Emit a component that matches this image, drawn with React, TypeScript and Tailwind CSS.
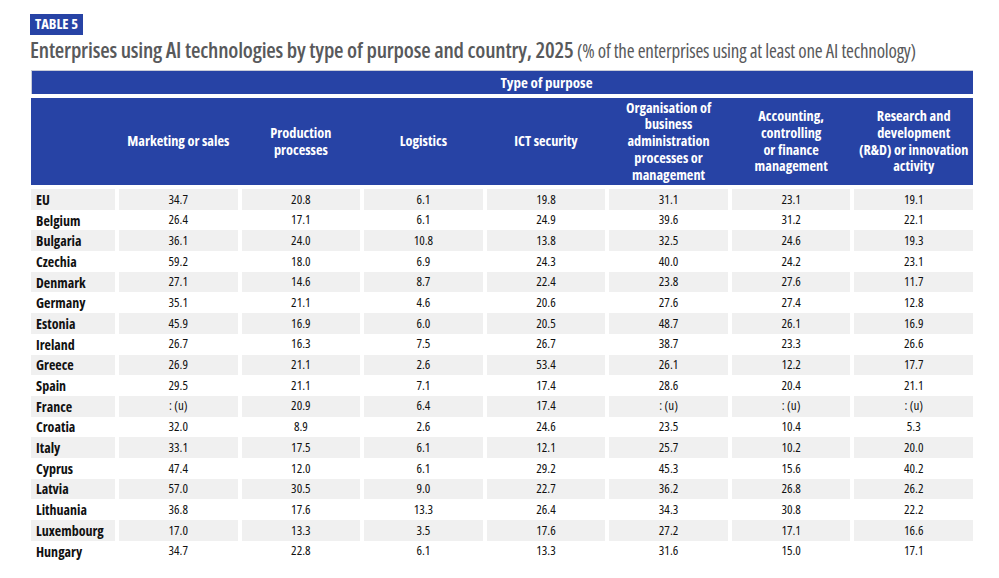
const rows: [string, string[]][] = [
  ["EU", ["34.7", "20.8", "6.1", "19.8", "31.1", "23.1", "19.1"]],
  ["Belgium", ["26.4", "17.1", "6.1", "24.9", "39.6", "31.2", "22.1"]],
  ["Bulgaria", ["36.1", "24.0", "10.8", "13.8", "32.5", "24.6", "19.3"]],
  ["Czechia", ["59.2", "18.0", "6.9", "24.3", "40.0", "24.2", "23.1"]],
  ["Denmark", ["27.1", "14.6", "8.7", "22.4", "23.8", "27.6", "11.7"]],
  ["Germany", ["35.1", "21.1", "4.6", "20.6", "27.6", "27.4", "12.8"]],
  ["Estonia", ["45.9", "16.9", "6.0", "20.5", "48.7", "26.1", "16.9"]],
  ["Ireland", ["26.7", "16.3", "7.5", "26.7", "38.7", "23.3", "26.6"]],
  ["Greece", ["26.9", "21.1", "2.6", "53.4", "26.1", "12.2", "17.7"]],
  ["Spain", ["29.5", "21.1", "7.1", "17.4", "28.6", "20.4", "21.1"]],
  ["France", [": (u)", "20.9", "6.4", "17.4", ": (u)", ": (u)", ": (u)"]],
  ["Croatia", ["32.0", "8.9", "2.6", "24.6", "23.5", "10.4", "5.3"]],
  ["Italy", ["33.1", "17.5", "6.1", "12.1", "25.7", "10.2", "20.0"]],
  ["Cyprus", ["47.4", "12.0", "6.1", "29.2", "45.3", "15.6", "40.2"]],
  ["Latvia", ["57.0", "30.5", "9.0", "22.7", "36.2", "26.8", "26.2"]],
  ["Lithuania", ["36.8", "17.6", "13.3", "26.4", "34.3", "30.8", "22.2"]],
  ["Luxembourg", ["17.0", "13.3", "3.5", "17.6", "27.2", "17.1", "16.6"]],
  ["Hungary", ["34.7", "22.8", "6.1", "13.3", "31.6", "15.0", "17.1"]],
];

const headers: string[][] = [
  ["Marketing or sales"],
  ["Production", "processes"],
  ["Logistics"],
  ["ICT security"],
  ["Organisation of", "business", "administration", "processes or", "management"],
  ["Accounting,", "controlling", "or finance", "management"],
  ["Research and", "development", "(R&D) or innovation", "activity"],
];

export default function App() {
  return (
    <div className="w-[999px] h-[578px] overflow-hidden bg-white font-['Open_Sans',sans-serif]">
      <div className="pl-[30px] pt-[11px] w-[973px]">
        <div className="inline-flex items-center h-[21px] px-[5px] bg-[#2743a5] text-white font-bold text-[14.5px] font-stretch-condensed leading-none">
          TABLE 5
        </div>
        <div className="h-[35px] whitespace-nowrap text-[#58595b] font-stretch-condensed leading-[29px] tracking-[-0.2px]">
          <span className="text-[21.7px] font-semibold">
            Enterprises using AI technologies by type of purpose and country, 2025
          </span>
          <span className="text-[19px] font-normal"> (% of the enterprises using at least one AI technology)</span>
        </div>
        <div className="ml-px grid grid-cols-[84px_repeat(7,1fr)] gap-x-[4px]">
          <div className="col-span-8 h-[24px] border-t border-l border-[#c9ccd8] bg-[#2743a5] grid grid-cols-[84px_1fr] gap-x-[4px]">
            <div />
            <div className="flex items-center justify-center text-white font-bold text-[15px] font-stretch-condensed">
              Type of purpose
            </div>
          </div>
          <div className="col-span-8 h-[4px]" />
          <div className="col-span-8 h-[87px] bg-[#2743a5] grid grid-cols-[84px_repeat(7,1fr)] gap-x-[4px]">
            <div />
            {headers.map((h, i) => (
              <div
                key={i}
                className="flex flex-col items-center justify-center text-center text-white font-bold text-[14.3px] leading-[16.7px] font-stretch-condensed whitespace-nowrap"
              >
                {h.map((l, j) => (
                  <span key={j}>{l}</span>
                ))}
              </div>
            ))}
          </div>
          <div className="col-span-8 h-[4px]" />
          {rows.map(([country, vals], r) => {
            const bg = r % 2 === 0 ? "bg-[#f0f0f0]" : "bg-white";
            return [
              <div
                key={`c${r}`}
                className={`${bg} h-[20.7px] flex items-center pl-[5px] text-[14px] font-bold text-[#111] font-stretch-semi-condensed whitespace-nowrap`}
              >
                {country}
              </div>,
              ...vals.map((v, i) => (
                <div
                  key={`v${r}-${i}`}
                  className={`${bg} h-[20.7px] flex items-center justify-center text-[13px] text-[#111] font-stretch-semi-condensed whitespace-nowrap`}
                >
                  {v}
                </div>
              )),
            ];
          })}
        </div>
      </div>
    </div>
  );
}
